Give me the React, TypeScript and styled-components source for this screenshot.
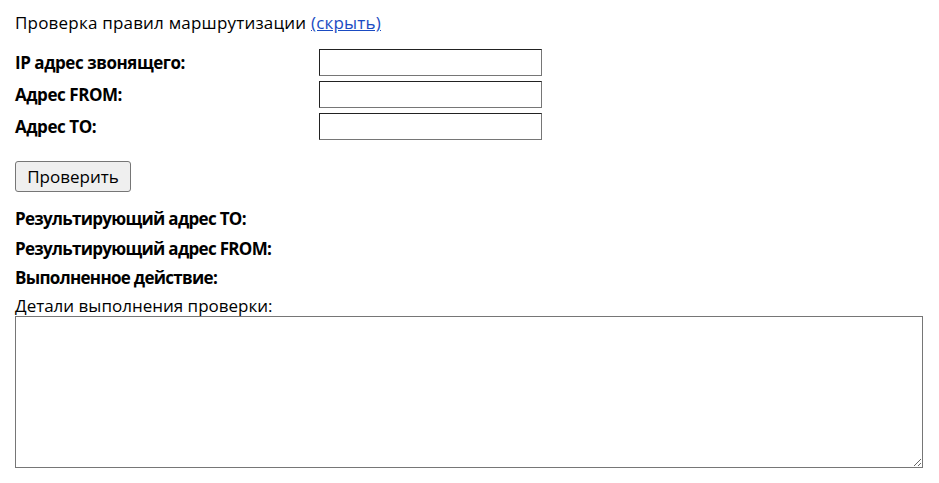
import React from "react";
import styled, { createGlobalStyle } from "styled-components";

const GlobalStyle = createGlobalStyle`
  body {
    margin: 0;
    padding: 12px 15px;
    font-family: "Open Sans", "Noto Sans", sans-serif;
    font-size: 17px;
    color: #000;
    background: #fff;
  }
`;

const Title = styled.div`
  line-height: 22px;
  letter-spacing: 0.2px;
  margin-bottom: 15px;
`;

const HideLink = styled.a`
  color: #1a4bc2;
  text-decoration: underline;
  cursor: pointer;
`;

const Form = styled.div`
  display: grid;
  grid-template-columns: 304px 223px;
  row-gap: 5px;
  align-items: center;
`;

const Label = styled.label`
  font-weight: 700;
  letter-spacing: -0.45px;
`;

const Input = styled.input`
  box-sizing: border-box;
  width: 223px;
  height: 27px;
  border: 1px solid;
  border-color: #222 #767676 #767676 #222;
  border-radius: 0;
  padding: 2px 4px;
  font: inherit;
`;

const CheckButton = styled.button`
  display: block;
  margin-top: 21px;
  width: 116px;
  height: 31px;
  padding: 0;
  font: inherit;
  background: #efefef;
  border: 1px solid #767676;
  border-radius: 3px;
  color: #000;
`;

const Results = styled.div`
  margin-top: 16px;
  display: flex;
  flex-direction: column;
  gap: 7.5px;
`;

const ResultLine = styled.div`
  font-weight: 700;
  letter-spacing: -0.7px;
  line-height: 22px;
`;

const DetailsLabel = styled.div`
  margin-top: 7px;
  line-height: 20px;
`;

const Details = styled.textarea`
  display: block;
  box-sizing: border-box;
  width: 908px;
  height: 152px;
  border: 1px solid #767676;
  border-radius: 0;
  font: inherit;
`;

const fields = ["IP адрес звонящего:", "Адрес FROM:", "Адрес TO:"];
const results = [
  "Результирующий адрес TO:",
  "Результирующий адрес FROM:",
  "Выполненное действие:",
];

export default function App() {
  return (
    <>
      <GlobalStyle />
      <Title>
        Проверка правил маршрутизации <HideLink>(скрыть)</HideLink>
      </Title>
      <Form>
        {fields.map((f) => (
          <React.Fragment key={f}>
            <Label>{f}</Label>
            <Input type="text" />
          </React.Fragment>
        ))}
      </Form>
      <CheckButton>Проверить</CheckButton>
      <Results>
        {results.map((r) => (
          <ResultLine key={r}>{r}</ResultLine>
        ))}
      </Results>
      <DetailsLabel>Детали выполнения проверки:</DetailsLabel>
      <Details />
    </>
  );
}
